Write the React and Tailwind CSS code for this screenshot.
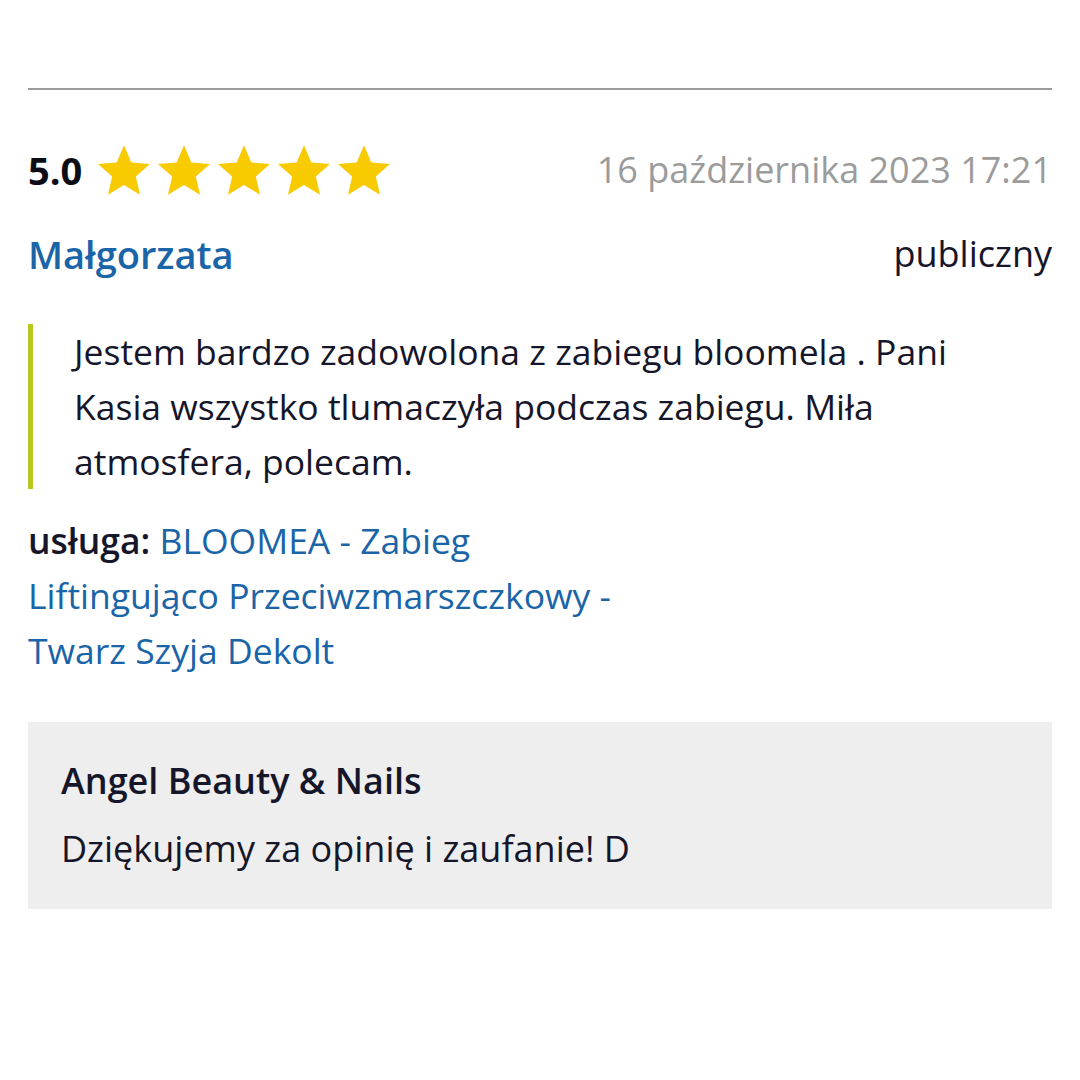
const Star = () => (
  <svg width="52" height="50" viewBox="2 2 20 19" className="shrink-0">
    <path
      d="M12 17.27L18.18 21l-1.64-7.03L22 9.24l-7.19-.61L12 2 9.19 8.63 2 9.24l5.46 4.73L5.82 21z"
      fill="#f7cb00"
    />
  </svg>
);

export default function App() {
  return (
    <div className="min-h-[1080px] w-[1080px] bg-white px-[28px] text-[#16162a] font-['Open_Sans',sans-serif]">
      {/* Divider */}
      <div className="pt-[88px]">
        <div className="h-[2px] bg-[#9e9e9e]" />
      </div>

      {/* Rating + date */}
      <div className="mt-[55px] flex items-center justify-between">
        <div className="flex items-center gap-[16px]">
          <span className="text-[38px] font-bold leading-none text-[#0c0c16]">5.0</span>
          <div className="flex items-center gap-[8px]">
            <Star />
            <Star />
            <Star />
            <Star />
            <Star />
          </div>
        </div>
        <span className="text-[36px] leading-none text-[#9b9b9b]">16 października 2023 17:21</span>
      </div>

      {/* Author */}
      <div className="mt-[40px] flex items-center justify-between">
        <span className="text-[38px] font-semibold leading-none text-[#1a64a8]">Małgorzata</span>
        <span className="text-[36px] leading-none">publiczny</span>
      </div>

      {/* Review text */}
      <blockquote className="mt-[51px] border-l-[5px] border-[#b8c81e] pl-[41px] pr-[41px] text-[35.5px] leading-[55px]">
        Jestem bardzo zadowolona z zabiegu bloomela . Pani Kasia wszystko tlumaczyła podczas zabiegu. Miła atmosfera, polecam.
      </blockquote>

      {/* Service */}
      <p className="mt-[24px] w-[600px] text-[35.5px] leading-[55px]">
        <span className="font-semibold">usługa:</span>{" "}
        <a className="text-[#1a64a8]">BLOOMEA - Zabieg Liftingująco Przeciwzmarszczkowy - Twarz Szyja Dekolt</a>
      </p>

      {/* Reply */}
      <div className="mt-[44px] bg-[#eeeeee] px-[33px] pt-[35px] pb-[36px]">
        <div className="text-[36px] font-semibold leading-[48px]">Angel Beauty &amp; Nails</div>
        <div className="mt-[20px] text-[36px] leading-[48px]">Dziękujemy za opinię i zaufanie! D</div>
      </div>
    </div>
  );
}
